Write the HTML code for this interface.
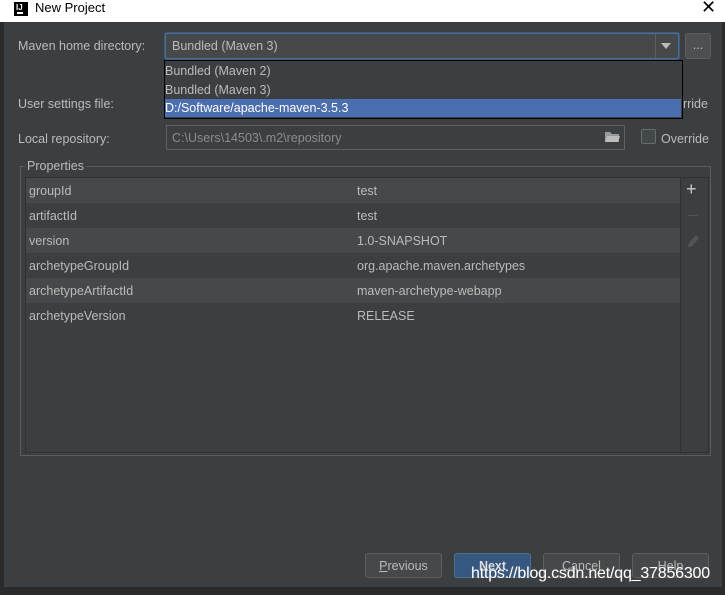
<html><head><style>
body{margin:0;width:725px;height:595px;background:#3c3f41;font-family:"Liberation Sans",sans-serif;font-size:12.5px;color:#bbbbbb;position:relative;overflow:hidden}
.a{position:absolute}
</style></head><body>
<div class="a" style="left:0;top:0;width:725px;height:22px;background:#fff;color:#000;font-size:13px">
<div class="a" style="left:14px;top:2px;width:14px;height:14px;background:#000"><div class="a" style="left:3px;top:10px;width:6px;height:2px;background:#fff"></div><div class="a" style="left:2px;top:1px;color:#fff;font-size:8px;font-weight:bold">IJ</div></div>
<div class="a" style="left:35px;top:0px">New Project</div>
<div class="a" style="left:701px;top:-3px;font-size:18px">✕</div>
</div>
<div class="a" style="left:0;top:22px;width:4px;height:573px;background:#2b2b2b"></div>
<div class="a" style="left:722px;top:22px;width:3px;height:573px;background:#2b2b2b"></div>
<div class="a" style="left:0;top:587px;width:725px;height:8px;background:#2b2b2b"></div>

<div class="a" style="left:18px;top:39px">Maven home directory:</div>
<div class="a" style="left:165px;top:33px;width:512px;height:24px;border:1px solid #4a6f98;border-radius:2px;background:#45494a;box-shadow:0 0 0 1px #3d5a7a"></div>
<div class="a" style="left:172px;top:39px">Bundled (Maven 3)</div>
<div class="a" style="left:655px;top:34px;width:1px;height:24px;background:#5e6060"></div>
<div class="a" style="left:661px;top:43px;width:0;height:0;border-left:5px solid transparent;border-right:5px solid transparent;border-top:6px solid #bbb"></div>
<div class="a" style="left:685px;top:33px;width:24px;height:24px;border:1px solid #5e6060;border-radius:3px;background:#4c5052;text-align:center;line-height:22px">...</div>

<div class="a" style="left:18px;top:97px">User settings file:</div>
<div class="a" style="left:676px;top:97px">erride</div>
<div class="a" style="left:18px;top:132px">Local repository:</div>
<div class="a" style="left:166px;top:125px;width:457px;height:23px;border:1px solid #5e6060;background:#3c3f41"></div>
<div class="a" style="left:172px;top:131px;color:#8c8c8c">C:\Users\14503\.m2\repository</div>
<svg class="a" style="left:604px;top:130px" width="16" height="13"><path d="M1 2h5l2 2h7v8H1z" fill="#9a9a9a"/><path d="M3 6h13l-2 6H1z" fill="#bbb"/></svg>
<div class="a" style="left:641px;top:129px;width:13px;height:13px;border:1px solid #6b6b6b;border-radius:2px;background:#43494a"></div>
<div class="a" style="left:661px;top:132px">Override</div>

<div class="a" style="left:164px;top:60px;width:517px;height:57px;background:#3c3f41;border:1px solid #000"></div>
<div class="a" style="left:165px;top:62px;width:517px;height:19px;line-height:19px">Bundled (Maven 2)</div>
<div class="a" style="left:165px;top:81px;width:517px;height:19px;line-height:19px">Bundled (Maven 3)</div>
<div class="a" style="left:165px;top:99px;width:516px;height:18px;line-height:19px;background:#4b6eaf;color:#fff">D:/Software/apache-maven-3.5.3</div>

<div class="a" style="left:20px;top:166px;width:689px;height:288px;border:1px solid #5a5d5f"></div>
<div class="a" style="left:25px;top:159px;background:#3c3f41;padding:0 2px">Properties</div>
<div class="a" style="left:25px;top:177px;width:682px;height:274px;border:1px solid #2f3233;background:#3c3f41"></div>
<div class="a" style="left:680px;top:178px;width:1px;height:273px;background:#2f3233"></div>
<div class="a" style="left:26px;top:178px;width:654px">
<div style="height:25px;background:#45494a;position:relative"><span class="a" style="left:3px;top:6px">groupId</span><span class="a" style="left:331px;top:6px">test</span></div>
<div style="height:25px;position:relative"><span class="a" style="left:3px;top:6px">artifactId</span><span class="a" style="left:331px;top:6px">test</span></div>
<div style="height:25px;background:#45494a;position:relative"><span class="a" style="left:3px;top:6px">version</span><span class="a" style="left:331px;top:6px">1.0-SNAPSHOT</span></div>
<div style="height:25px;position:relative"><span class="a" style="left:3px;top:6px">archetypeGroupId</span><span class="a" style="left:331px;top:6px">org.apache.maven.archetypes</span></div>
<div style="height:25px;background:#45494a;position:relative"><span class="a" style="left:3px;top:6px">archetypeArtifactId</span><span class="a" style="left:331px;top:6px">maven-archetype-webapp</span></div>
<div style="height:25px;position:relative"><span class="a" style="left:3px;top:6px">archetypeVersion</span><span class="a" style="left:331px;top:6px">RELEASE</span></div>
</div>
<div class="a" style="left:686px;top:179px;font-size:18px;color:#ccc">+</div>
<div class="a" style="left:688px;top:215px;width:10px;height:1px;background:#555"></div>
<svg class="a" style="left:686px;top:234px" width="14" height="14"><path d="M2 13l1-4 7-8 3 3-7 8z" fill="#555"/></svg>

<div class="a" style="left:365px;top:553px;width:75px;height:23px;border:1px solid #5e6060;border-radius:3px;background:#45494a;text-align:center;line-height:25px"><u>P</u>revious</div>
<div class="a" style="left:454px;top:553px;width:75px;height:23px;border:1px solid #4c708c;border-radius:3px;background:#365880;text-align:center;line-height:25px;font-weight:bold;color:#ddd">Next</div>
<div class="a" style="left:543px;top:553px;width:75px;height:23px;border:1px solid #5e6060;border-radius:3px;background:#45494a;text-align:center;line-height:25px">Cancel</div>
<div class="a" style="left:632px;top:553px;width:75px;height:23px;border:1px solid #5e6060;border-radius:3px;background:#45494a;text-align:center;line-height:25px">Help</div>
<div class="a" style="left:471px;top:565px;font-size:16px;letter-spacing:-0.2px;color:#fff;text-shadow:0 0 1px #666">https://blog.csdn.net/qq_37856300</div>
</body></html>
